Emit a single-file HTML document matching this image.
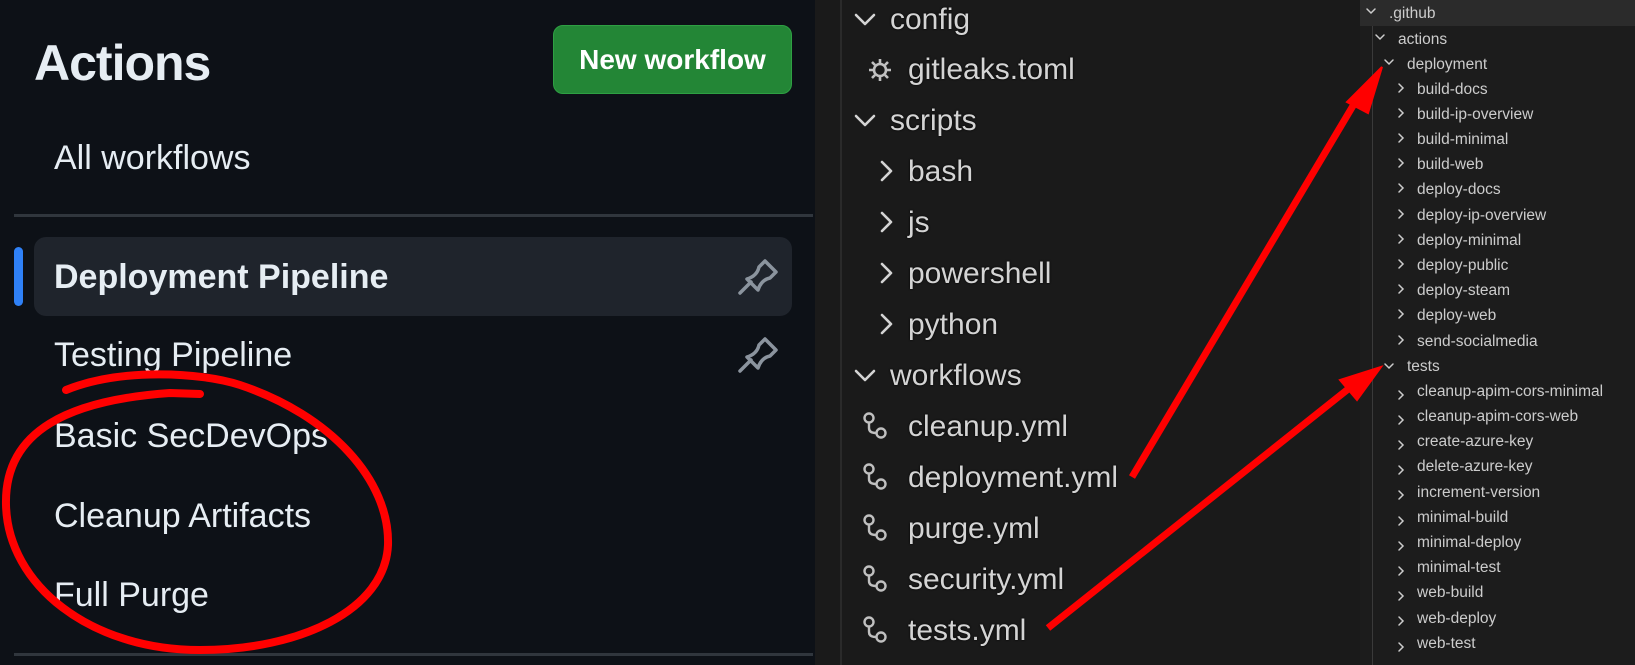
<!DOCTYPE html>
<html><head><meta charset="utf-8"><style>
*{margin:0;padding:0;box-sizing:border-box}
body{width:1635px;height:665px;overflow:hidden;background:#181818;position:relative;font-family:"Liberation Sans",sans-serif}
.lp{position:absolute;left:0;top:0;width:815px;height:665px;background:#0d1117;color:#e6edf3}
.a{position:absolute;white-space:nowrap}
.mid{position:absolute;left:815px;top:0;width:545px;height:665px;background:#1a1a1a}
.rp{position:absolute;left:1360px;top:0;width:275px;height:665px;background:#1c1c1c}
.m{position:absolute;color:#d4d4d4;font-size:30px;white-space:nowrap;text-shadow:0 0 2px #000}
.r{position:absolute;color:#cccccc;font-size:15.5px;white-space:nowrap}
</style></head><body>
<div class="lp">
  <div class="a" style="left:34px;top:34px;font-size:50px;font-weight:bold;letter-spacing:-1px">Actions</div>
  <div class="a" style="left:553px;top:25px;width:239px;height:69px;background:#238636;border:1px solid #2ea043;border-radius:10px;color:#fff;font-weight:bold;font-size:28px;line-height:67px;text-align:center">New workflow</div>
  <div class="a" style="left:54px;top:139px;font-size:34px">All workflows</div>
  <div class="a" style="left:14px;top:214px;width:799px;height:3px;background:#30363d"></div>
  <div class="a" style="left:34px;top:237px;width:758px;height:79px;background:#1f242c;border-radius:12px"></div>
  <div class="a" style="left:14px;top:247px;width:9px;height:59px;background:#2f81f7;border-radius:5px"></div>
  <div class="a" style="left:54px;top:258px;font-size:34px;font-weight:bold">Deployment Pipeline</div>
  <div class="a" style="left:54px;top:336px;font-size:34px">Testing Pipeline</div>
  <div class="a" style="left:54px;top:417px;font-size:34px">Basic SecDevOps</div>
  <div class="a" style="left:54px;top:497px;font-size:34px">Cleanup Artifacts</div>
  <div class="a" style="left:54px;top:576px;font-size:34px">Full Purge</div>
  <div class="a" style="left:14px;top:653px;width:799px;height:3px;background:#30363d"></div>
  <svg class="a" style="left:737px;top:258px" width="42" height="38" viewBox="0 0 42 38"><path d="M3 35 L14 24 M10 21 Q20 18 22 9 L28 3 L39 14 L33 20 Q24 22 21 32 Z" fill="none" stroke="#8b949e" stroke-width="3.5" stroke-linejoin="round" stroke-linecap="round"/></svg>
  <svg class="a" style="left:737px;top:336px" width="42" height="38" viewBox="0 0 42 38"><path d="M3 35 L14 24 M10 21 Q20 18 22 9 L28 3 L39 14 L33 20 Q24 22 21 32 Z" fill="none" stroke="#8b949e" stroke-width="3.5" stroke-linejoin="round" stroke-linecap="round"/></svg>
</div>
<div class="mid">
  <div class="a" style="left:25px;top:0;width:2px;height:665px;background:#2a2a2a"></div>
</div>
<div class="rp">
  <div class="a" style="left:0;top:0;width:275px;height:26px;background:#2b2b2b"></div>
  <div class="a" style="left:12px;top:26px;width:1px;height:639px;background:#3a3a3a"></div>
</div>
<svg class="a" style="left:0;top:0" width="1635" height="665" viewBox="0 0 1635 665">
 <g fill="none" stroke="#d4d4d4" stroke-width="2.6" stroke-linecap="round" stroke-linejoin="round">
  <path d="M856 15 L865 24 L874 15"/><path d="M856 116 L865 125 L874 116"/><path d="M856 371 L865 380 L874 371"/>
  <path d="M882 162 L891 171 L882 180"/><path d="M882 213 L891 222 L882 231"/><path d="M882 264 L891 273 L882 282"/><path d="M882 315 L891 324 L882 333"/>
 </g>
 <g fill="none" stroke="#c0c0c0" stroke-width="2.6">
  <circle cx="880" cy="70" r="6"/>
  <path d="M880 59v4M880 77v4M869 70h4M887 70h4M872 62l3 3M885 75l3 3M888 62l-3 3M875 75l-3 3"/>
 </g>
 <g fill="none" stroke="#c0c0c0" stroke-width="2.4">
  <g id="wf"><circle cx="869" cy="418" r="4.5"/><circle cx="881" cy="433" r="4.5"/><path d="M869 423 V428 Q869 433 876 433"/></g>
  <use href="#wf" y="51"/><use href="#wf" y="102"/><use href="#wf" y="153"/><use href="#wf" y="204"/>
 </g>
 <g fill="none" stroke="#cccccc" stroke-width="1.5" stroke-linecap="round">
  <path d="M1367 9 L1371 13 L1375 9"/><path d="M1376 35 L1380 39 L1384 35"/><path d="M1385 60 L1389 64 L1393 60"/><path d="M1385 364 L1389 368 L1393 364"/>
  <g id="ch"><path d="M1399 84 L1403 88 L1399 92"/></g>
  <use href="#ch" y="25"/><use href="#ch" y="50"/><use href="#ch" y="75"/><use href="#ch" y="100"/><use href="#ch" y="126"/><use href="#ch" y="151"/><use href="#ch" y="176"/><use href="#ch" y="201"/><use href="#ch" y="226"/><use href="#ch" y="252"/>
  <use href="#ch" y="307"/><use href="#ch" y="332"/><use href="#ch" y="357"/><use href="#ch" y="382"/><use href="#ch" y="407"/><use href="#ch" y="433"/><use href="#ch" y="458"/><use href="#ch" y="483"/><use href="#ch" y="508"/><use href="#ch" y="533"/><use href="#ch" y="559"/>
 </g>
</svg>
<div class="m" style="left:890px;top:3px">config</div>
<div class="m" style="left:908px;top:53px">gitleaks.toml</div>
<div class="m" style="left:890px;top:104px">scripts</div>
<div class="m" style="left:908px;top:155px">bash</div>
<div class="m" style="left:908px;top:206px">js</div>
<div class="m" style="left:908px;top:257px">powershell</div>
<div class="m" style="left:908px;top:308px">python</div>
<div class="m" style="left:890px;top:359px">workflows</div>
<div class="m" style="left:908px;top:410px">cleanup.yml</div>
<div class="m" style="left:908px;top:461px">deployment.yml</div>
<div class="m" style="left:908px;top:512px">purge.yml</div>
<div class="m" style="left:908px;top:563px">security.yml</div>
<div class="m" style="left:908px;top:614px">tests.yml</div>

<div class="r" style="left:1389px;top:5px">.github</div>
<div class="r" style="left:1398px;top:31px">actions</div>
<div class="r" style="left:1407px;top:56px">deployment</div>
<div class="r" style="left:1417px;top:81px">build-docs</div>
<div class="r" style="left:1417px;top:106px">build-ip-overview</div>
<div class="r" style="left:1417px;top:131px">build-minimal</div>
<div class="r" style="left:1417px;top:156px">build-web</div>
<div class="r" style="left:1417px;top:181px">deploy-docs</div>
<div class="r" style="left:1417px;top:207px">deploy-ip-overview</div>
<div class="r" style="left:1417px;top:232px">deploy-minimal</div>
<div class="r" style="left:1417px;top:257px">deploy-public</div>
<div class="r" style="left:1417px;top:282px">deploy-steam</div>
<div class="r" style="left:1417px;top:307px">deploy-web</div>
<div class="r" style="left:1417px;top:333px">send-socialmedia</div>
<div class="r" style="left:1407px;top:358px">tests</div>
<div class="r" style="left:1417px;top:383px">cleanup-apim-cors-minimal</div>
<div class="r" style="left:1417px;top:408px">cleanup-apim-cors-web</div>
<div class="r" style="left:1417px;top:433px">create-azure-key</div>
<div class="r" style="left:1417px;top:458px">delete-azure-key</div>
<div class="r" style="left:1417px;top:484px">increment-version</div>
<div class="r" style="left:1417px;top:509px">minimal-build</div>
<div class="r" style="left:1417px;top:534px">minimal-deploy</div>
<div class="r" style="left:1417px;top:559px">minimal-test</div>
<div class="r" style="left:1417px;top:584px">web-build</div>
<div class="r" style="left:1417px;top:610px">web-deploy</div>
<div class="r" style="left:1417px;top:635px">web-test</div>

<svg class="a" style="left:0;top:0" width="1635" height="665" viewBox="0 0 1635 665">
 <g fill="#ff0000" stroke="#ff0000">
  <path d="M1132 477 L1360 94" stroke-width="7" fill="none"/>
  <path d="M1382 67 L1347 102 L1368 113 Z" stroke-width="2"/>
  <path d="M1048 628 L1352 386" stroke-width="7" fill="none"/>
  <path d="M1381 367 L1340 380 L1357 400 Z" stroke-width="2"/>
 </g>
 <path d="M66 390 C120 368 200 372 240 385 C330 415 390 480 388 545 C385 610 300 650 200 650 C90 650 8 585 6 505 C4 430 70 400 170 393 L200 394" fill="none" stroke="#ff0000" stroke-width="8" stroke-linecap="round"/>
</svg>
</body></html>
